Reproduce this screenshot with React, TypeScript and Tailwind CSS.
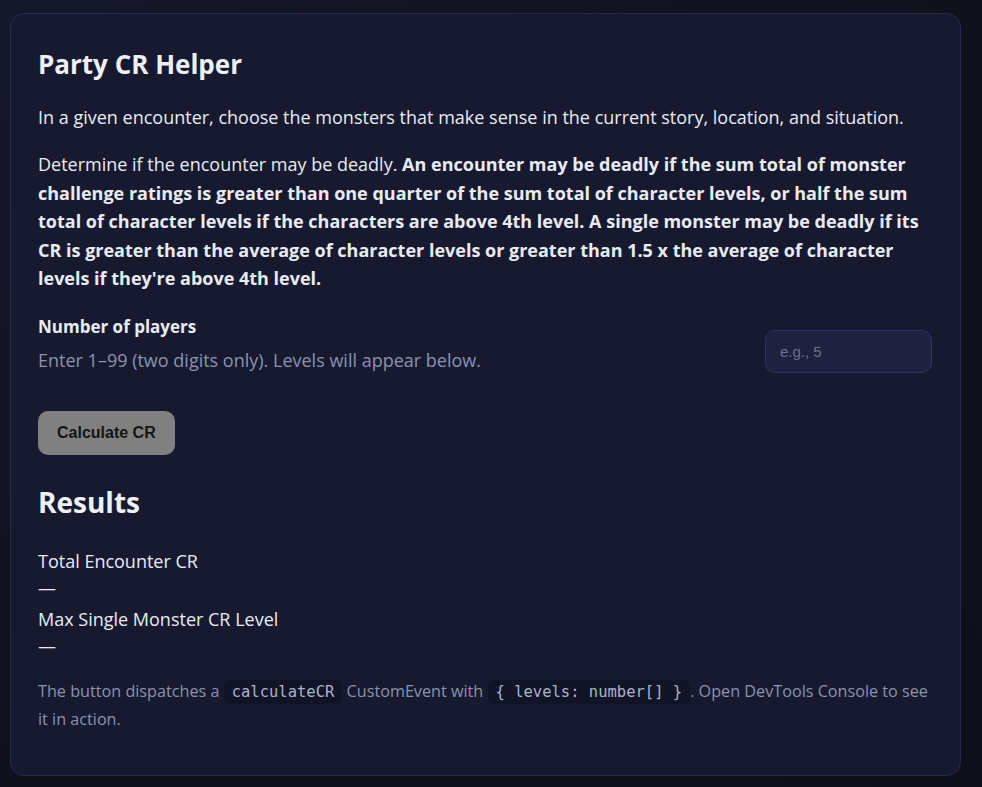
import React, { useState } from 'react';

export default function App() {
  const [players, setPlayers] = useState('');

  const calculate = () => {
    const n = parseInt(players, 10) || 0;
    const levels = Array.from({ length: n }, () => 1);
    window.dispatchEvent(new CustomEvent('calculateCR', { detail: { levels } }));
  };

  return (
    <div className="min-h-screen bg-gradient-to-br from-[#15182b] via-[#0f111d] to-[#0d0f1a] px-[10px] pt-[13px] pb-[12px] font-['Open_Sans',sans-serif] text-[#e8ebf5]">
      <div className="rounded-[14px] border border-[#272b4d] bg-[#171a2f] pl-[27px] pr-[28px] pt-[30px] pb-[42px] w-[951px]">
        <h1 className="text-[26px] font-bold leading-[40px] text-[#eef0f8]">Party CR Helper</h1>

        <p className="mt-[19px] text-[18px] leading-[28px]">
          In a given encounter, choose the monsters that make sense in the current story, location, and situation.
        </p>

        <p className="mt-[19px] text-[18px] leading-[28.5px]">
          Determine if the encounter may be deadly.{' '}
          <strong className="font-bold">
            An encounter may be deadly if the sum total of monster challenge ratings is greater than one quarter of the sum total of character levels, or half the sum total of character levels if the characters are above 4th level. A single monster may be deadly if its CR is greater than the average of character levels or greater than 1.5 x the average of character levels if they're above 4th level.
          </strong>
        </p>

        <div className="mt-[21px] flex items-center justify-between">
          <div>
            <div className="text-[17px] font-bold leading-[26px]">Number of players</div>
            <div className="mt-[7px] text-[18px] leading-[26px] text-[#8a93b0]">
              Enter 1–99 (two digits only). Levels will appear below.
            </div>
          </div>
          <input
            type="text"
            inputMode="numeric"
            maxLength={2}
            value={players}
            onChange={e => setPlayers(e.target.value.replace(/\D/g, ''))}
            placeholder="e.g., 5"
            className="mt-[16px] h-[43px] w-[167px] rounded-[10px] border border-[#2d3363] bg-[#1e2240] px-[14px] font-['Liberation_Sans',sans-serif] text-[15px] text-[#e8ebf5] placeholder:text-[#6f7387] outline-none"
          />
        </div>

        <button
          onClick={calculate}
          className="mt-[38px] h-[44px] rounded-[10px] bg-[#808080] px-[19px] font-['Liberation_Sans',sans-serif] text-[16px] font-bold text-[#151515]"
        >
          Calculate CR
        </button>

        <h2 className="mt-[27px] text-[28px] font-bold leading-[40px] text-[#eef0f8]">Results</h2>

        <div className="mt-[25px] text-[18px] leading-[28px]">
          <div>Total Encounter CR</div>
          <div className="leading-[26px]">—</div>
          <div className="mt-[4px]">Max Single Monster CR Level</div>
          <div className="leading-[26px]">—</div>
        </div>

        <p className="mt-[19px] text-[16.2px] leading-[27px] text-[#8a93ad]">
          The button dispatches a{' '}
          <code className="rounded-[6px] bg-[#111426] px-[8px] py-[3px] font-['DejaVu_Sans_Mono',monospace] text-[15.5px] text-[#aab2cc]">calculateCR</code>{' '}
          CustomEvent with{' '}
          <code className="rounded-[6px] bg-[#111426] px-[8px] py-[3px] font-['DejaVu_Sans_Mono',monospace] text-[15.5px] text-[#aab2cc]">{'{ levels: number[] }'}</code>
          . Open DevTools Console to see it in action.
        </p>
      </div>
    </div>
  );
}
